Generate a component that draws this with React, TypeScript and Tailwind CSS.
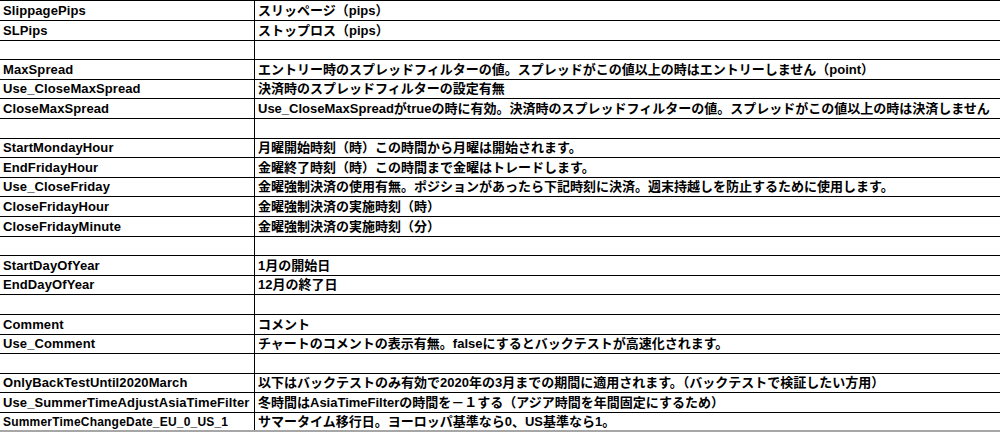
import React from "react";

type Row = { name: string; desc: string; h: string; small?: boolean };

const rows: Row[] = [
  { name: "SlippagePips", desc: "スリッページ（pips）", h: "h-[20px]" },
  { name: "SLPips", desc: "ストップロス（pips）", h: "h-[20px]" },
  { name: "", desc: "", h: "h-[19px]" },
  { name: "MaxSpread", desc: "エントリー時のスプレッドフィルターの値。スプレッドがこの値以上の時はエントリーしません（point）", h: "h-[20px]" },
  { name: "Use_CloseMaxSpread", desc: "決済時のスプレッドフィルターの設定有無", h: "h-[19px]" },
  { name: "CloseMaxSpread", desc: "Use_CloseMaxSpreadがtrueの時に有効。決済時のスプレッドフィルターの値。スプレッドがこの値以上の時は決済しません", h: "h-[20px]" },
  { name: "", desc: "", h: "h-[20px]" },
  { name: "StartMondayHour", desc: "月曜開始時刻（時）この時間から月曜は開始されます。", h: "h-[19px]" },
  { name: "EndFridayHour", desc: "金曜終了時刻（時）この時間まで金曜はトレードします。", h: "h-[20px]" },
  { name: "Use_CloseFriday", desc: "金曜強制決済の使用有無。ポジションがあったら下記時刻に決済。週末持越しを防止するために使用します。", h: "h-[19px]" },
  { name: "CloseFridayHour", desc: "金曜強制決済の実施時刻（時）", h: "h-[20px]" },
  { name: "CloseFridayMinute", desc: "金曜強制決済の実施時刻（分）", h: "h-[20px]" },
  { name: "", desc: "", h: "h-[19px]" },
  { name: "StartDayOfYear", desc: "1月の開始日", h: "h-[20px]" },
  { name: "EndDayOfYear", desc: "12月の終了日", h: "h-[19px]" },
  { name: "", desc: "", h: "h-[20px]" },
  { name: "Comment", desc: "コメント", h: "h-[20px]" },
  { name: "Use_Comment", desc: "チャートのコメントの表示有無。falseにするとバックテストが高速化されます。", h: "h-[19px]" },
  { name: "", desc: "", h: "h-[20px]" },
  { name: "OnlyBackTestUntil2020March", desc: "以下はバックテストのみ有効で2020年の3月までの期間に適用されます。（バックテストで検証したい方用）", h: "h-[19px]" },
  { name: "Use_SummerTimeAdjustAsiaTimeFilter", desc: "冬時間はAsiaTimeFilterの時間を－１する（アジア時間を年間固定にするため）", h: "h-[20px]" },
  { name: "SummerTimeChangeDate_EU_0_US_1", desc: "サマータイム移行日。ヨーロッパ基準なら0、US基準なら1。", h: "h-[19px]", small: true },
];

export default function App() {
  return (
    <div className="w-[1000px] h-[432px] overflow-hidden bg-white text-black font-['Liberation_Sans','Noto_Sans_CJK_JP',sans-serif] font-bold">
      <div className="border-t border-black">
        {rows.map((r, i) => (
          <div
            key={i}
            className={`flex ${r.h} ${i === rows.length - 1 ? "border-b-2 border-[#a6a6a6]" : "border-b border-black"}`}
          >
            <div
              className={`w-[255px] shrink-0 border-r border-black pl-[3px] flex items-center whitespace-nowrap overflow-hidden ${r.small ? "text-[12px] tracking-[0.2px]" : "text-[13px] tracking-[0.1px]"}`}
            >
              {r.name}
            </div>
            <div className="flex-1 pl-[3px] flex items-center whitespace-nowrap overflow-hidden text-[13px]">
              {r.desc}
            </div>
          </div>
        ))}
      </div>
    </div>
  );
}
